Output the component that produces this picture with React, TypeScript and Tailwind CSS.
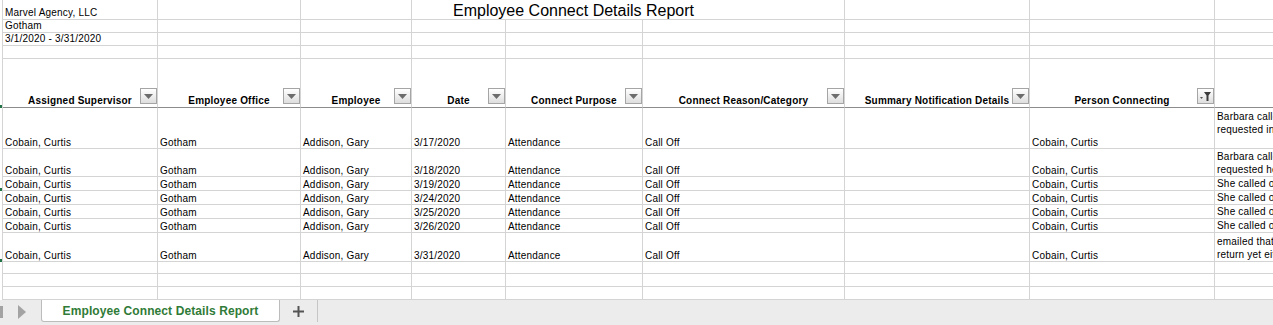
import clsx from 'clsx';

const GRID = 'border-[#d4d4d4]';

// widths of the lettered columns, last one runs off the window
const COLS = ['w-[155px]', 'w-[143px]', 'w-[111px]', 'w-[94px]', 'w-[137px]', 'w-[202px]', 'w-[185px]', 'w-[185px]', 'w-[220px]'];

const HEADERS = [
  'Assigned Supervisor',
  'Employee Office',
  'Employee',
  'Date',
  'Connect Purpose',
  'Connect Reason/Category',
  'Summary Notification Details',
  'Person Connecting',
];

type Row = {
  h: string;
  date: string;
  notes: string[];
  top?: boolean;
  mark?: boolean;
};

const ROWS: Row[] = [
  { h: 'h-[41px]', date: '3/17/2020', notes: ['Barbara called off and', 'requested information on FMLA'], top: true },
  { h: 'h-[28px]', date: '3/18/2020', notes: ['Barbara called off and', 'requested her supervisor call back'] },
  { h: 'h-[14px]', date: '3/19/2020', notes: ['She called off sick today'], mark: true },
  { h: 'h-[14px]', date: '3/24/2020', notes: ['She called off sick today'] },
  { h: 'h-[14px]', date: '3/25/2020', notes: ['She called off sick today'] },
  { h: 'h-[14px]', date: '3/26/2020', notes: ['She called off sick today'] },
  { h: 'h-[29px]', date: '3/31/2020', notes: ['emailed that she could not', 'return yet either way'], mark: true },
];

function Spacer({ mark }: { mark?: boolean }) {
  return (
    <div className={clsx('w-[3px] shrink-0 border-r flex items-end', GRID)}>
      {mark && <div className="w-[2px] h-[3px] bg-[#217346]" />}
    </div>
  );
}

function DropButton({ filtered }: { filtered?: boolean }) {
  return (
    <div className="absolute right-0 bottom-[3px] w-[17px] h-[16px] border border-[#a5a5a5] bg-gradient-to-b from-white to-[#dedede] flex items-center justify-center">
      {filtered ? (
        <svg width="13" height="11" viewBox="0 0 13 11">
          <polygon points="1,6 4,6 2.5,8" fill="#555" />
          <polygon points="5,1 12,1 9.5,4.5 9.5,10 7.5,10 7.5,4.5" fill="#3c3c3c" />
        </svg>
      ) : (
        <svg width="9" height="5" viewBox="0 0 9 5">
          <polygon points="0,0 9,0 4.5,5" fill="#6c6c6c" />
        </svg>
      )}
    </div>
  );
}

function TopRow({ h, text, title }: { h: string; text?: string; title?: boolean }) {
  return (
    <div className={clsx('flex', h)}>
      <Spacer />
      <div className={clsx('shrink-0 border-r border-b flex items-end pl-[2px] leading-[12px] whitespace-nowrap', GRID, COLS[0])}>
        {text}
      </div>
      <div className={clsx('shrink-0 border-r border-b', GRID, COLS[1])} />
      <div className={clsx('shrink-0 border-r border-b', GRID, COLS[2])} />
      {title ? (
        <div className={clsx('shrink-0 w-[433px] border-r border-b flex items-end pl-[41px] text-[16px] leading-[16px] tracking-normal whitespace-nowrap', GRID)}>
          Employee Connect Details Report
        </div>
      ) : (
        <>
          <div className={clsx('shrink-0 border-r border-b', GRID, COLS[3])} />
          <div className={clsx('shrink-0 border-r border-b', GRID, COLS[4])} />
          <div className={clsx('shrink-0 border-r border-b', GRID, COLS[5])} />
        </>
      )}
      <div className={clsx('shrink-0 border-r border-b', GRID, COLS[6])} />
      <div className={clsx('shrink-0 border-r border-b', GRID, COLS[7])} />
      <div className={clsx('shrink-0 border-b', GRID, COLS[8])} />
    </div>
  );
}

function DataRow({ row }: { row: Row }) {
  const values = ['Cobain, Curtis', 'Gotham', 'Addison, Gary', row.date, 'Attendance', 'Call Off', '', 'Cobain, Curtis'];
  return (
    <div className={clsx('flex', row.h)}>
      <Spacer mark={row.mark} />
      {values.map((v, i) => (
        <div
          key={i}
          className={clsx('shrink-0 border-r border-b flex items-end pl-[2px] leading-[11px] whitespace-nowrap overflow-hidden', GRID, COLS[i])}
        >
          {v}
        </div>
      ))}
      <div
        className={clsx(
          'shrink-0 border-b flex flex-col pl-[2px] leading-[13px] whitespace-nowrap',
          row.top ? 'justify-start pt-[2px]' : 'justify-end',
          GRID,
          COLS[8],
        )}
      >
        {row.notes.map((n) => (
          <div key={n}>{n}</div>
        ))}
      </div>
    </div>
  );
}

function EmptyRow({ h }: { h: string }) {
  return (
    <div className={clsx('flex', h)}>
      <Spacer />
      {COLS.map((c, i) => (
        <div key={i} className={clsx('shrink-0 border-b', i < 8 && 'border-r', GRID, c)} />
      ))}
    </div>
  );
}

export default function App() {
  return (
    <div className="w-[1273px] h-[325px] overflow-hidden bg-white text-black text-[10px] tracking-[0.2px] font-['Liberation_Sans',Arial,sans-serif] flex flex-col">
      <div className="h-[300px] flex flex-col">
        <TopRow h="h-[20px]" text="Marvel Agency, LLC" title />
        <TopRow h="h-[13px]" text="Gotham" />
        <TopRow h="h-[13px]" text="3/1/2020 - 3/31/2020" />
        <TopRow h="h-[13px]" />

        {/* header row with filter buttons */}
        <div className="flex h-[49px]">
          <Spacer mark />
          {HEADERS.map((t, i) => (
            <div
              key={t}
              className={clsx('relative shrink-0 border-r border-b border-b-[#8c8c8c] flex items-end justify-center font-bold leading-[12px] whitespace-nowrap', GRID, COLS[i])}
            >
              {t}
              <DropButton filtered={i === 7} />
            </div>
          ))}
          <div className={clsx('shrink-0 border-b border-b-[#8c8c8c]', COLS[8])} />
        </div>

        {ROWS.map((r) => (
          <DataRow key={r.date} row={r} />
        ))}
        <EmptyRow h="h-[12px]" />
        <EmptyRow h="h-[13px]" />
        <EmptyRow h="h-[13px]" />
      </div>

      {/* sheet tabs */}
      <div className="h-[25px] bg-[#ececec] flex items-start">
        <svg width="41" height="25" viewBox="0 0 41 25" className="shrink-0">
          <rect x="0" y="6" width="3" height="12" fill="#a3a3a3" />
          <polygon points="18,5 26,12 18,19" fill="#a3a3a3" />
        </svg>
        <div className="w-[239px] h-[22px] shrink-0 bg-white border-x border-b border-[#bcbcbc] rounded-b-[3px] flex items-center justify-center text-[12px] font-bold tracking-[0.1px] text-[#2f7b37]">
          Employee Connect Details Report
        </div>
        <div className="w-[38px] h-[22px] shrink-0 border-r border-[#c6c6c6] flex items-center justify-center">
          <svg width="11" height="11" viewBox="0 0 11 11">
            <rect x="4.5" y="0" width="2" height="11" fill="#555" />
            <rect x="0" y="4.5" width="11" height="2" fill="#555" />
          </svg>
        </div>
      </div>
    </div>
  );
}
